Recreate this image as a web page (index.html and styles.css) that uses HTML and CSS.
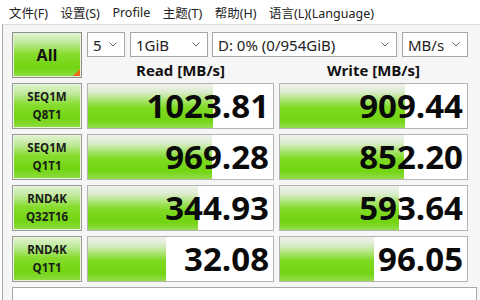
FILE: index.html
```html
<!DOCTYPE html>
<html lang="zh-CN">

<head>
	<meta charset="UTF-8">
	<title>CrystalDiskMark</title>
	<link rel="stylesheet" href="styles.css">
</head>

<body>

	<div class="menubar">
		<span>文件(F)</span>
		<span>设置(S)</span>
		<span>Profile</span>
		<span>主题(T)</span>
		<span>帮助(H)</span>
		<span>语言(L)(Language)</span>
	</div>

	<div class="window">
		<div class="board">
			<button type="button" class="all">All</button>

			<div class="controls">
				<div class="selects">
					<div class="select sel-count"><span>5</span><svg class="chev" width="8" height="5" viewBox="0 0 8 5"><polyline points="0.5,0.5 4,4 7.5,0.5" /></svg></div>
					<div class="select sel-size"><span>1GiB</span><svg class="chev" width="8" height="5" viewBox="0 0 8 5"><polyline points="0.5,0.5 4,4 7.5,0.5" /></svg></div>
					<div class="select sel-drive"><span>D: 0% (0/954GiB)</span><svg class="chev" width="8" height="5" viewBox="0 0 8 5"><polyline points="0.5,0.5 4,4 7.5,0.5" /></svg></div>
					<div class="select sel-unit"><span>MB/s</span><svg class="chev" width="8" height="5" viewBox="0 0 8 5"><polyline points="0.5,0.5 4,4 7.5,0.5" /></svg></div>
				</div>
				<div class="heads">
					<div>Read [MB/s]</div>
					<div>Write [MB/s]</div>
				</div>
			</div>

			<!-- SEQ1M Q8T1 -->
			<div class="test">SEQ1M<br>Q8T1</div>
			<div class="result"><div class="fill" style="width:125px"></div><span>1023.81</span></div>
			<div class="result"><div class="fill" style="width:125px"></div><span>909.44</span></div>

			<!-- SEQ1M Q1T1 -->
			<div class="test">SEQ1M<br>Q1T1</div>
			<div class="result"><div class="fill" style="width:124px"></div><span>969.28</span></div>
			<div class="result"><div class="fill" style="width:124px"></div><span>852.20</span></div>

			<!-- RND4K Q32T16 -->
			<div class="test">RND4K<br>Q32T16</div>
			<div class="result"><div class="fill" style="width:110px"></div><span>344.93</span></div>
			<div class="result"><div class="fill" style="width:119px"></div><span>593.64</span></div>

			<!-- RND4K Q1T1 -->
			<div class="test">RND4K<br>Q1T1</div>
			<div class="result"><div class="fill" style="width:78px"></div><span>32.08</span></div>
			<div class="result"><div class="fill" style="width:94px"></div><span>96.05</span></div>
		</div>

		<div class="comment"></div>
	</div>

</body>

</html>
```

FILE: styles.css
```css
/* CrystalDiskMark main window */
body {
	margin: 0;
	background: #ffffff;
	font-family: "Open Sans", "Noto Sans CJK SC", sans-serif;
	color: #111;
	overflow: hidden;
}

.menubar {
	height: 24px;
	display: flex;
	align-items: center;
	gap: 12.5px;
	padding: 1px 0 0 9px;
	box-sizing: border-box;
	font-family: "Noto Sans", "Noto Sans CJK SC", sans-serif;
	font-size: 12.5px;
	color: #222;
	background: #ffffff;
}

.window {
	width: 465px;
	height: 268px;
	margin-left: 2px;
	padding: 7px 7px 0 9px;
	border-left: 1px solid #a8a8a8;
	border-right: 1px solid #a8a8a8;
	border-top: 1px solid #dcdcdc;
	background: #f6f6f6;
	overflow: hidden;
}

.board {
	display: grid;
	grid-template-columns: 70px 187px 189px;
	grid-auto-rows: 46px;
	gap: 5px;
}

.all {
	position: relative;
	margin: 0;
	padding: 0;
	border: 1px solid #8e8e8e;
	box-shadow: inset 0 0 0 1px #e6f5da;
	background: linear-gradient(to bottom, #e2f2d4 0%, #bfe99a 22%, #86dc2c 48%, #72d412 78%, #8fdc44 100%);
	font-family: "Open Sans", sans-serif;
	font-size: 16px;
	font-weight: 700;
	color: #111;
}

.all::after {
	content: "";
	position: absolute;
	right: 1px;
	bottom: 1px;
	border-style: solid;
	border-width: 0 0 7px 7px;
	border-color: transparent transparent #ef6a14 transparent;
}

.controls {
	grid-column: 2 / 4;
	display: flex;
	flex-direction: column;
}

.selects {
	display: flex;
	height: 25px;
	gap: 5px;
}

.select {
	box-sizing: border-box;
	height: 25px;
	display: flex;
	align-items: center;
	justify-content: space-between;
	padding: 0 7px 0 5px;
	border: 1px solid #a6a6a6;
	background: #ffffff;
	font-family: "Noto Sans", sans-serif;
	font-size: 15px;
	color: #222;
}

.sel-count {
	width: 38px;
}

.sel-size {
	width: 78px;
	margin-right: -1px;
}

.sel-drive {
	width: 185px;
}

.sel-unit {
	width: 66px;
}

.chev {
	fill: none;
	stroke: #666;
	stroke-width: 1;
}

.heads {
	display: grid;
	grid-template-columns: 187px 189px;
	gap: 5px;
	height: 21px;
	align-items: end;
}

.heads div {
	text-align: center;
	font-size: 15px;
	font-weight: 700;
	line-height: 16px;
}

.test {
	box-sizing: border-box;
	display: flex;
	align-items: center;
	justify-content: center;
	text-align: center;
	border: 1px solid #9a9a9a;
	box-shadow: inset 0 0 0 1px #e9f6de;
	background: linear-gradient(to bottom, #e2f2d4 0%, #bfe99a 22%, #86dc2c 48%, #72d412 78%, #8fdc44 100%);
	font-size: 11.5px;
	font-weight: 700;
	line-height: 18px;
	color: #1a1a1a;
}

.result {
	position: relative;
	box-sizing: border-box;
	border: 1px solid #b4b4b4;
	background: #ffffff;
	text-align: right;
	overflow: hidden;
}

.fill {
	position: absolute;
	left: 0;
	top: 0;
	bottom: 0;
	background: linear-gradient(to bottom, #f0f2ee 0%, #dcecce 18%, #a6e46a 38%, #7fda22 54%, #72d412 82%, #94de4c 100%);
}

.result span {
	position: relative;
	display: block;
	padding-right: 4px;
	font-size: 33px;
	font-weight: 700;
	line-height: 44px;
	color: #0a0a0a;
}

.comment {
	box-sizing: border-box;
	height: 20px;
	margin-top: 5px;
	border: 1px solid #a8a8a8;
	background: #ffffff;
}
```
